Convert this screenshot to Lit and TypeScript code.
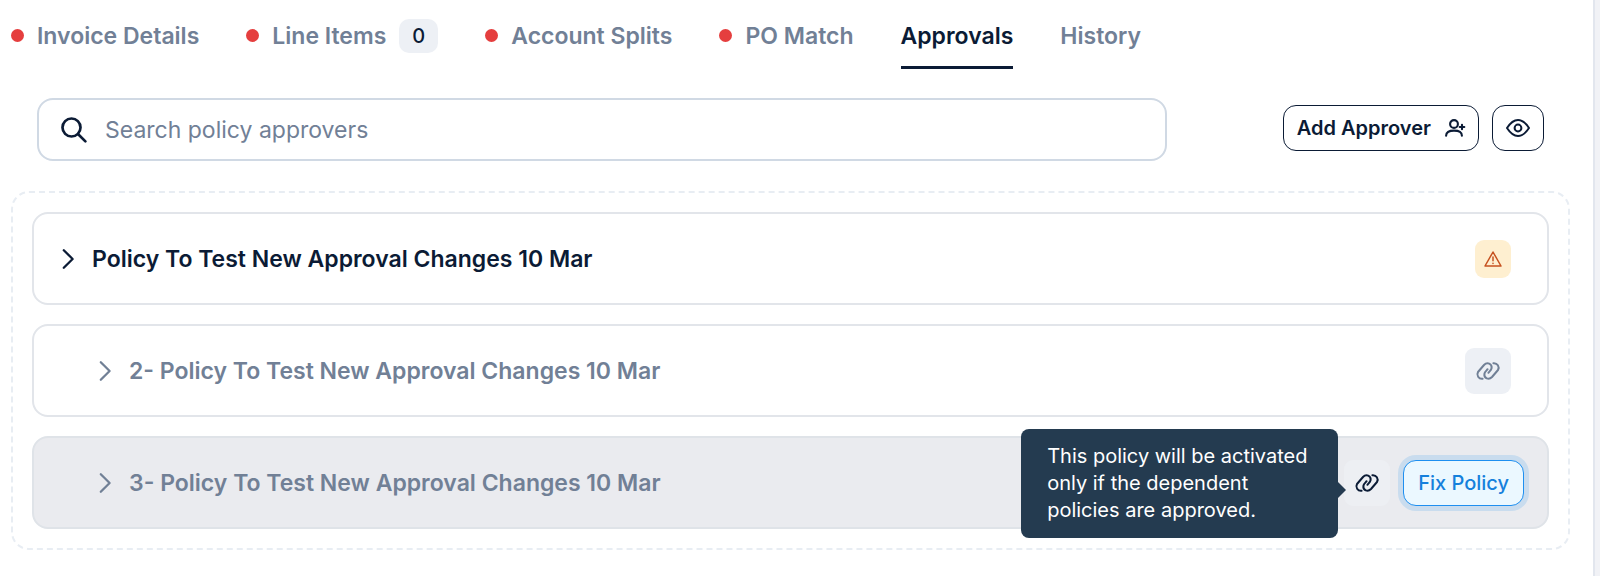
import { LitElement, html, css, svg, nothing } from "lit";
import { customElement, property, state } from "lit/decorators.js";

type IconName = "search" | "chevron" | "userPlus" | "eye" | "warning" | "link";

const ICONS: Record<IconName, { box: string; width: number; height: number; stroke: number; body: unknown }> = {
  search: {
    box: "0 0 26 26", width: 26, height: 26, stroke: 2.7,
    body: svg`<circle cx="10.5" cy="10.5" r="9"></circle><path d="M17.2 17.2 24.4 24.4"></path>`,
  },
  chevron: {
    box: "0 0 12 20", width: 12, height: 20, stroke: 2.3,
    body: svg`<path d="M1.8 1.2 10.6 10 1.8 18.8"></path>`,
  },
  userPlus: {
    box: "0 0 20 18", width: 20, height: 18, stroke: 2.1,
    body: svg`<circle cx="9" cy="5" r="3.900"></circle><path d="M1.100 16.800C1.100 13 3.600 11.600 9 11.600S16.900 13 16.900 16.800"></path><path d="M17 5.700v4.600M14.700 8h4.600"></path>`,
  },
  eye: {
    box: "0 0 24 18", width: 24, height: 18, stroke: 2,
    body: svg`<path d="M1 9C4.500 3.600 8 1 12 1s7.500 2.600 11 8c-3.500 5.400-7 8-11 8S4.500 14.400 1 9Z"></path><circle cx="12" cy="9" r="3.400"></circle>`,
  },
  warning: {
    box: "0 0 18 16", width: 18, height: 16, stroke: 1.5,
    body: svg`<path d="M9 1 17 15H1Z"></path><path d="M9 6v3.800M9 12.200v.400"></path>`,
  },
  link: {
    box: "0 0 24 18", width: 24, height: 18, stroke: 2,
    body: svg`<path d="M6.600 16.800C2.600 17.200.200 13.200 2 10L8 3C11.200-.400 16.200 1.600 15.600 6.200C15.400 8 13.400 9.600 12.400 10.800"></path><path d="M17.400 1.200C21.400.800 23.800 4.800 22 8L16 15C12.800 18.400 7.800 16.400 8.400 11.800C8.600 10 10.600 8.400 11.600 7.200"></path>`,
  },
};

const icon = (name: IconName) => {
  const i = ICONS[name];
  return html`<svg class="icon" aria-hidden="true" viewBox=${i.box} width=${i.width} height=${i.height}
    fill="none" stroke="currentColor" stroke-width=${i.stroke} stroke-linecap="round" stroke-linejoin="round">${i.body}</svg>`;
};

const base = css`
  * { box-sizing: border-box; }
  button, input {
    font: inherit;
    color: inherit;
    margin: 0;
    padding: 0;
    border: 0;
    background: none;
  }
  button { cursor: pointer; }
  .icon { display: block; flex: none; overflow: visible; }
`;

interface Tab { label: string; alert?: boolean; count?: number; }

@customElement("invoice-tabs")
class InvoiceTabs extends LitElement {
  @state() private active = "Approvals";

  private tabs: Tab[] = [
    { label: "Invoice Details", alert: true },
    { label: "Line Items", alert: true, count: 0 },
    { label: "Account Splits", alert: true },
    { label: "PO Match", alert: true },
    { label: "Approvals" },
    { label: "History" },
  ];

  static styles = [base, css`
    :host { display: block; }
    .tabs { display: flex; gap: 47px; padding: 5px 11px 0; }
    .tab {
      display: flex;
      align-items: center;
      gap: 13px;
      height: 64px;
      border-bottom: 3px solid transparent;
      font-size: 23px;
      font-weight: 600;
      color: #718096;
      white-space: nowrap;
    }
    .active { color: #0b1b35; border-color: #0b1b35; }
    .dot { width: 13px; height: 13px; border-radius: 50%; background: #e53e3e; }
    .count {
      padding: 0 13px;
      line-height: 34px;
      border-radius: 10px;
      background: #edf0f5;
      color: #0b1b35;
      font-size: 20px;
      font-weight: 500;
    }
  `];

  render() {
    return html`<div class="tabs" role="tablist">
      ${this.tabs.map((t) => html`<button role="tab" class="tab ${t.label === this.active ? "active" : ""}"
        aria-selected=${t.label === this.active ? "true" : "false"} @click=${() => (this.active = t.label)}>
        ${t.alert ? html`<span class="dot"></span>` : nothing}<span>${t.label}</span>${t.count !== undefined ? html`<span class="count">${t.count}</span>` : nothing}
      </button>`)}
    </div>`;
  }
}

@customElement("approver-toolbar")
class ApproverToolbar extends LitElement {
  static styles = [base, css`
    :host { display: flex; align-items: center; padding: 29px 49px 30px 37px; }
    .search {
      flex: 1;
      display: flex;
      align-items: center;
      gap: 18px;
      height: 63px;
      margin-right: 116px;
      padding: 0 22px;
      border: 2px solid #d0d9e4;
      border-radius: 16px;
      background: #fff;
      color: #0b1b35;
    }
    .input { flex: 1; min-width: 0; height: 100%; outline: none; font-size: 23px; }
    .input::placeholder { color: #718096; opacity: 1; }
    .actions { display: flex; gap: 13px; padding-bottom: 4px; }
    .button {
      display: flex;
      align-items: center;
      gap: 14px;
      height: 46px;
      padding: 0 13px;
      border: 1px solid #0b1b35;
      border-radius: 13px;
      font-size: 20px;
      font-weight: 600;
      color: #0b1b35;
      white-space: nowrap;
    }
  `];

  render() {
    return html`
      <label class="search">${icon("search")}
        <input class="input" type="text" aria-label="Search policy approvers" placeholder="Search policy approvers" />
      </label>
      <div class="actions">
        <button class="button">Add Approver ${icon("userPlus")}</button>
        <button class="button" aria-label="Preview">${icon("eye")}</button>
      </div>`;
  }
}

@customElement("policy-card")
class PolicyCard extends LitElement {
  @property() label = "";
  @property({ type: Boolean }) nested = false;
  @property({ type: Boolean }) disabled = false;
  @property() status: "warning" | "linked" | "broken" = "linked";

  static styles = [base, css`
    :host { display: block; }
    .card {
      display: flex;
      align-items: center;
      justify-content: space-between;
      height: 93px;
      padding: 0 36px 0 28px;
      border: 2px solid #e2e5ea;
      border-radius: 16px;
      background: #fff;
      color: #0b1b35;
    }
    .nested { padding-left: 65px; color: #718096; }
    .disabled { padding-right: 23px; background: #eaebef; border-color: #dfe3e8; }
    .toggle {
      display: flex;
      align-items: center;
      gap: 18px;
      font-size: 23px;
      font-weight: 600;
      white-space: nowrap;
    }
    .side { display: flex; align-items: center; gap: 13px; }
    .chip {
      position: relative;
      display: flex;
      align-items: center;
      justify-content: center;
      width: 46px;
      height: 46px;
      border-radius: 9px;
      background: #edf0f5;
      color: #718096;
    }
    .warning { width: 36px; height: 38px; background: #feefd0; color: #c6511f; }
    .dark { background: #edeff3; color: #0b1b35; }
    .fix {
      height: 46px;
      padding: 0 14px;
      border: 1px solid #1e8ff0;
      border-radius: 13px;
      background: #ebf8ff;
      box-shadow: 0 0 0 5px #c9dcee;
      color: #1580dc;
      font-size: 20px;
      font-weight: 500;
      white-space: nowrap;
    }
    .tip {
      position: absolute;
      right: calc(100% + 6px);
      bottom: -32px;
      width: 317px;
      padding: 14px 26px;
      border-radius: 8px;
      background: #243b50;
      color: #fff;
      font-size: 20px;
      font-weight: 400;
      line-height: 27px;
    }
    .tip::after {
      content: "";
      position: absolute;
      left: 100%;
      top: 53px;
      border: 8px solid transparent;
      border-left-color: #243b50;
      border-right-width: 0;
    }
  `];

  private side() {
    if (this.status === "warning") return html`<span class="chip warning">${icon("warning")}</span>`;
    if (this.status === "linked") return html`<span class="chip">${icon("link")}</span>`;
    return html`
      <span class="chip dark" aria-describedby="tip">${icon("link")}
        <span class="tip" id="tip" role="tooltip">This policy will be activated only if the dependent policies are approved.</span>
      </span>
      <button class="fix">Fix Policy</button>`;
  }

  render() {
    return html`<div class="card ${this.nested ? "nested" : ""} ${this.disabled ? "disabled" : ""}">
      <button class="toggle" aria-expanded="false">${icon("chevron")}<span>${this.label}</span></button>
      <div class="side">${this.side()}</div>
    </div>`;
  }
}

@customElement("app-root")
class AppRoot extends LitElement {
  static styles = [base, css`
    :host {
      display: flex;
      min-height: 100vh;
      background: #fff;
      font-family: Inter, "Liberation Sans", sans-serif;
      color: #0b1b35;
    }
    .main { flex: 1; min-width: 0; border-right: 2px solid #e2e6ee; }
    .gutter { width: 5px; background: #f1f2f6; }
    .group {
      display: flex;
      flex-direction: column;
      gap: 19px;
      margin: 0 23px 0 11px;
      padding: 19px;
      border: 2px dashed #e8edf3;
      border-radius: 18px;
    }
  `];

  render() {
    return html`
      <main class="main">
        <invoice-tabs></invoice-tabs>
        <approver-toolbar></approver-toolbar>
        <section class="group" aria-label="Approval policies">
          <policy-card label="Policy To Test New Approval Changes 10 Mar" status="warning"></policy-card>
          <policy-card label="2- Policy To Test New Approval Changes 10 Mar" nested status="linked"></policy-card>
          <policy-card label="3- Policy To Test New Approval Changes 10 Mar" nested disabled status="broken"></policy-card>
        </section>
      </main>
      <div class="gutter"></div>`;
  }
}
